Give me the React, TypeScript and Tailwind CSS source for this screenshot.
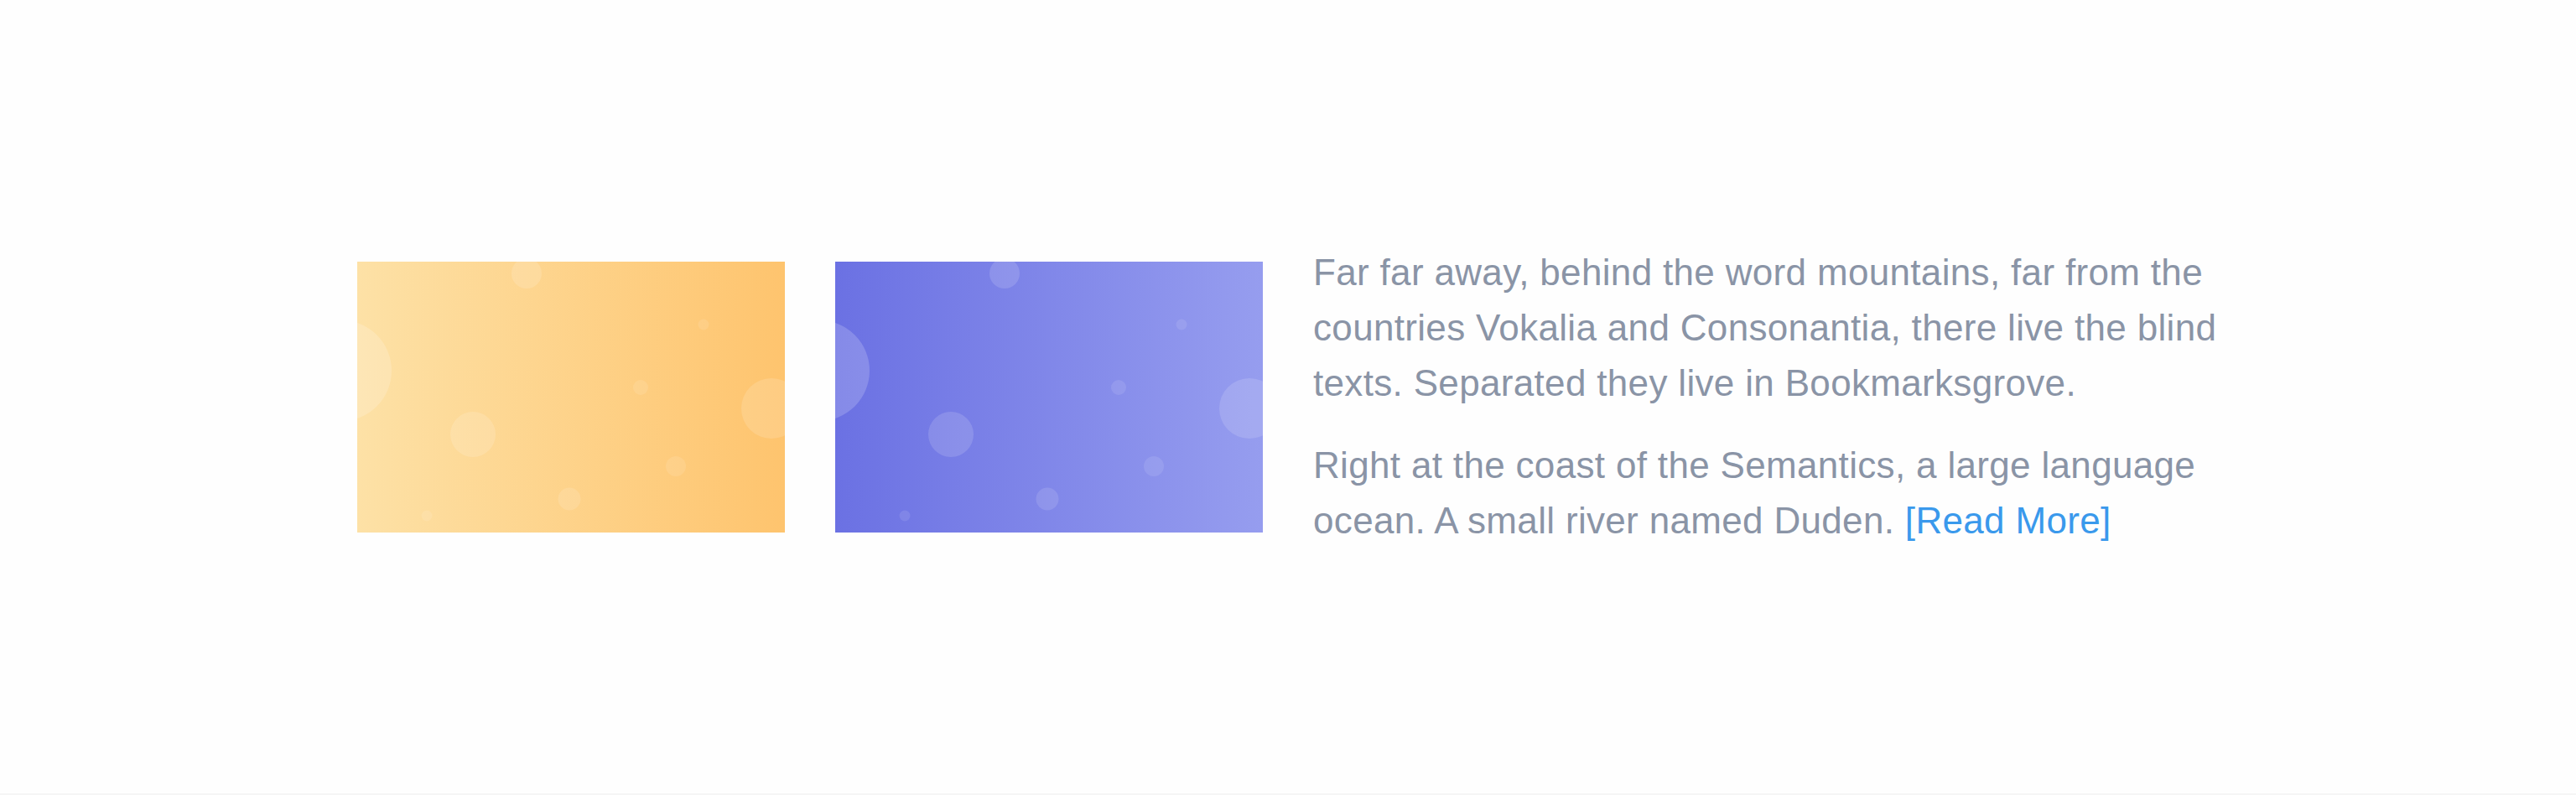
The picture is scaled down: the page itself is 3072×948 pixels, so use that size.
// Hooks
import React from "react"

const bubbles = [
  { cx: 202, cy: 14, r: 18, o: 0.14 },
  { cx: -19, cy: 130, r: 60, o: 0.18 },
  { cx: 413, cy: 75, r: 6.5, o: 0.1 },
  { cx: 338, cy: 150, r: 9, o: 0.1 },
  { cx: 494, cy: 175, r: 36, o: 0.14 },
  { cx: 138, cy: 206, r: 27, o: 0.14 },
  { cx: 380, cy: 244, r: 12, o: 0.1 },
  { cx: 253, cy: 283, r: 13.5, o: 0.12 },
  { cx: 83, cy: 303, r: 6.5, o: 0.1 },
]

function Card({ id, from, to }: { id: string; from: string; to: string }) {
  return (
    <div className="w-[510px] h-[323px] shrink-0 overflow-hidden">
      <svg width="510" height="323" viewBox="0 0 510 323" className="block">
        <defs>
          <linearGradient id={id} x1="0" y1="0" x2="1" y2="0">
            <stop offset="0" stopColor={from} />
            <stop offset="1" stopColor={to} />
          </linearGradient>
        </defs>
        <rect width="510" height="323" fill={`url(#${id})`} />
        {bubbles.map((b, i) => (
          <circle key={i} cx={b.cx} cy={b.cy} r={b.r} fill="#ffffff" fillOpacity={b.o} />
        ))}
      </svg>
    </div>
  )
}

function App() {
  return (
    <div className="bg-[#fefefe]" style={{ fontFamily: '"Liberation Sans", Arial, sans-serif' }}>
      <section className="h-[946px] flex items-center justify-center">
        <div className="w-[2220px] flex items-center gap-[60px]">
          <Card id="yellow" from="#fde1a6" to="#fec46e" />
          <Card id="purple" from="#6b71e3" to="#969def" />
          <div className="w-[1080px] text-[44px] leading-[66px] tracking-[0.33px] text-[#8a94a6]">
            <p className="mb-[32px]">
              Far far away, behind the word mountains, far from the countries Vokalia and Consonantia, there live the blind texts. Separated they live in Bookmarksgrove.
            </p>
            <p>
              Right at the coast of the Semantics, a large language ocean. A small river named Duden.{" "}
              <a href="#" className="text-[#3a99ec]">[Read More]</a>
            </p>
          </div>
        </div>
      </section>
      <div className="h-[2px] bg-[#f5f5f5]" />
    </div>
  )
}

export default App
